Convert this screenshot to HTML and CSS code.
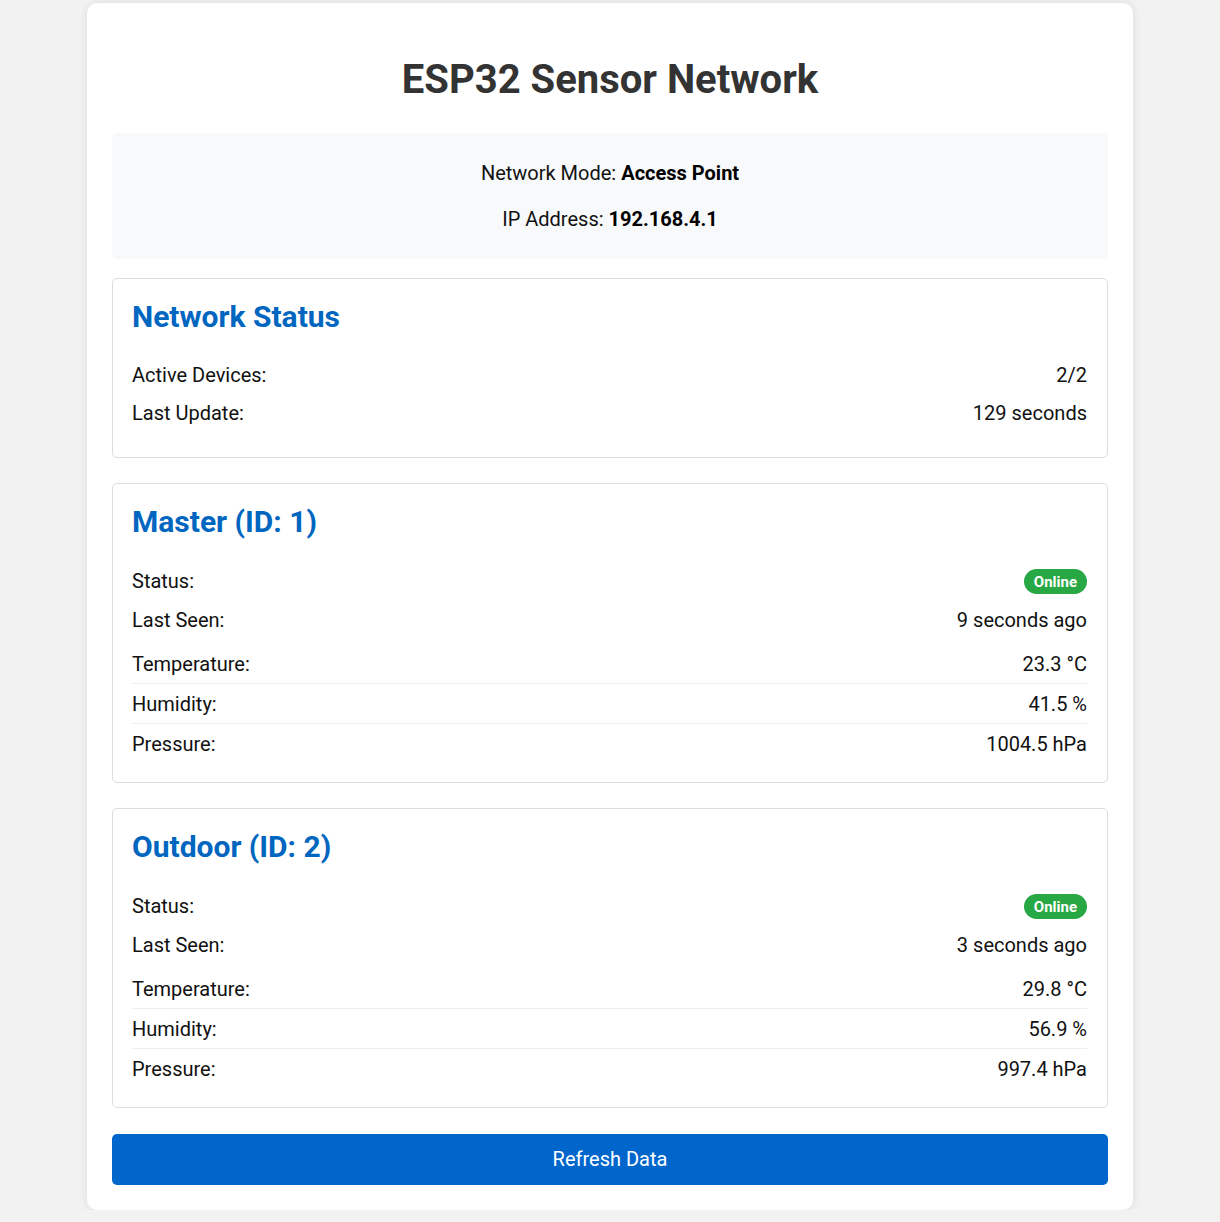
FILE: index.html
```html
<!DOCTYPE html>
<html lang="en">
<head>
<meta charset="utf-8">
<title>ESP32 Sensor Network</title>
<link rel="stylesheet" href="styles.css">
</head>
<body>
<div class="container">
  <h1 class="title">ESP32 Sensor Network</h1>
  <div class="info">
    <p class="info-line">Network Mode: <strong>Access Point</strong></p>
    <p class="info-line">IP Address: <strong>192.168.4.1</strong></p>
  </div>

  <div class="card">
    <h2 class="card-title">Network Status</h2>
    <div class="row"><span>Active Devices:</span><span>2/2</span></div>
    <div class="row"><span>Last Update:</span><span>129 seconds</span></div>
  </div>

  <div class="card">
    <h2 class="card-title">Master (ID: 1)</h2>
    <div class="row row-badge"><span>Status:</span><span class="badge">Online</span></div>
    <div class="row"><span>Last Seen:</span><span>9 seconds ago</span></div>
    <div class="sensors">
      <div class="sensor-row"><span>Temperature:</span><span>23.3 °C</span></div>
      <div class="sensor-row"><span>Humidity:</span><span>41.5 %</span></div>
      <div class="sensor-row"><span>Pressure:</span><span>1004.5 hPa</span></div>
    </div>
  </div>

  <div class="card">
    <h2 class="card-title">Outdoor (ID: 2)</h2>
    <div class="row row-badge"><span>Status:</span><span class="badge">Online</span></div>
    <div class="row"><span>Last Seen:</span><span>3 seconds ago</span></div>
    <div class="sensors">
      <div class="sensor-row"><span>Temperature:</span><span>29.8 °C</span></div>
      <div class="sensor-row"><span>Humidity:</span><span>56.9 %</span></div>
      <div class="sensor-row"><span>Pressure:</span><span>997.4 hPa</span></div>
    </div>
  </div>

  <button class="refresh" type="button">Refresh Data</button>
</div>
</body>
</html>
```

FILE: styles.css
```css
* { box-sizing: border-box; }

html, body {
  margin: 0;
  background: #f2f2f2;
}

body {
  padding-top: 3px;
  font-family: Roboto, "Liberation Sans", Arial, sans-serif;
  font-size: 20px;
  line-height: 28px;
  color: #111;
}

.container {
  width: 1046px;
  margin: 0 auto;
  background: #fff;
  border-radius: 10px;
  box-shadow: 0 0 10px rgba(0, 0, 0, 0.1);
  padding: 25px;
}

.title {
  margin: 31px 0 32px;
  font-size: 40px;
  line-height: 42px;
  font-weight: 700;
  text-align: center;
  color: #333;
}

.info {
  background: #f8f9fa;
  border-radius: 5px;
  padding: 8px 15px;
  text-align: center;
  margin-bottom: 19px;
}

.info-line {
  margin: 18px 0;
}

.info-line strong { font-weight: 700; color: #000; }

.card {
  border: 1px solid #ddd;
  border-radius: 5px;
  padding: 20px 20px 20px 19px;
  margin-bottom: 25px;
}

.card-title {
  margin: 0 0 26px;
  font-size: 30px;
  line-height: 36px;
  font-weight: 700;
  color: #0066c0;
}

.row {
  display: flex;
  justify-content: space-between;
  align-items: center;
  margin-bottom: 10px;
}

.row-badge { min-height: 30px; }

.badge {
  background: #28a745;
  color: #fff;
  font-size: 15px;
  line-height: 18px;
  font-weight: 700;
  padding: 4px 10px 3px;
  border-radius: 13px;
}

.sensor-row {
  display: flex;
  justify-content: space-between;
  padding: 6px 0 5px;
  border-bottom: 1px solid #eee;
}

.sensor-row:last-child {
  border-bottom: none;
  padding-bottom: 4px;
}

.refresh {
  display: block;
  width: 100%;
  margin-top: 26px;
  border: none;
  border-radius: 5px;
  background: #0066cc;
  color: #fff;
  font-family: Roboto, "Liberation Sans", Arial, sans-serif;
  font-size: 20px;
  line-height: 28px;
  padding: 11px 0 12px;
  cursor: pointer;
}
```
